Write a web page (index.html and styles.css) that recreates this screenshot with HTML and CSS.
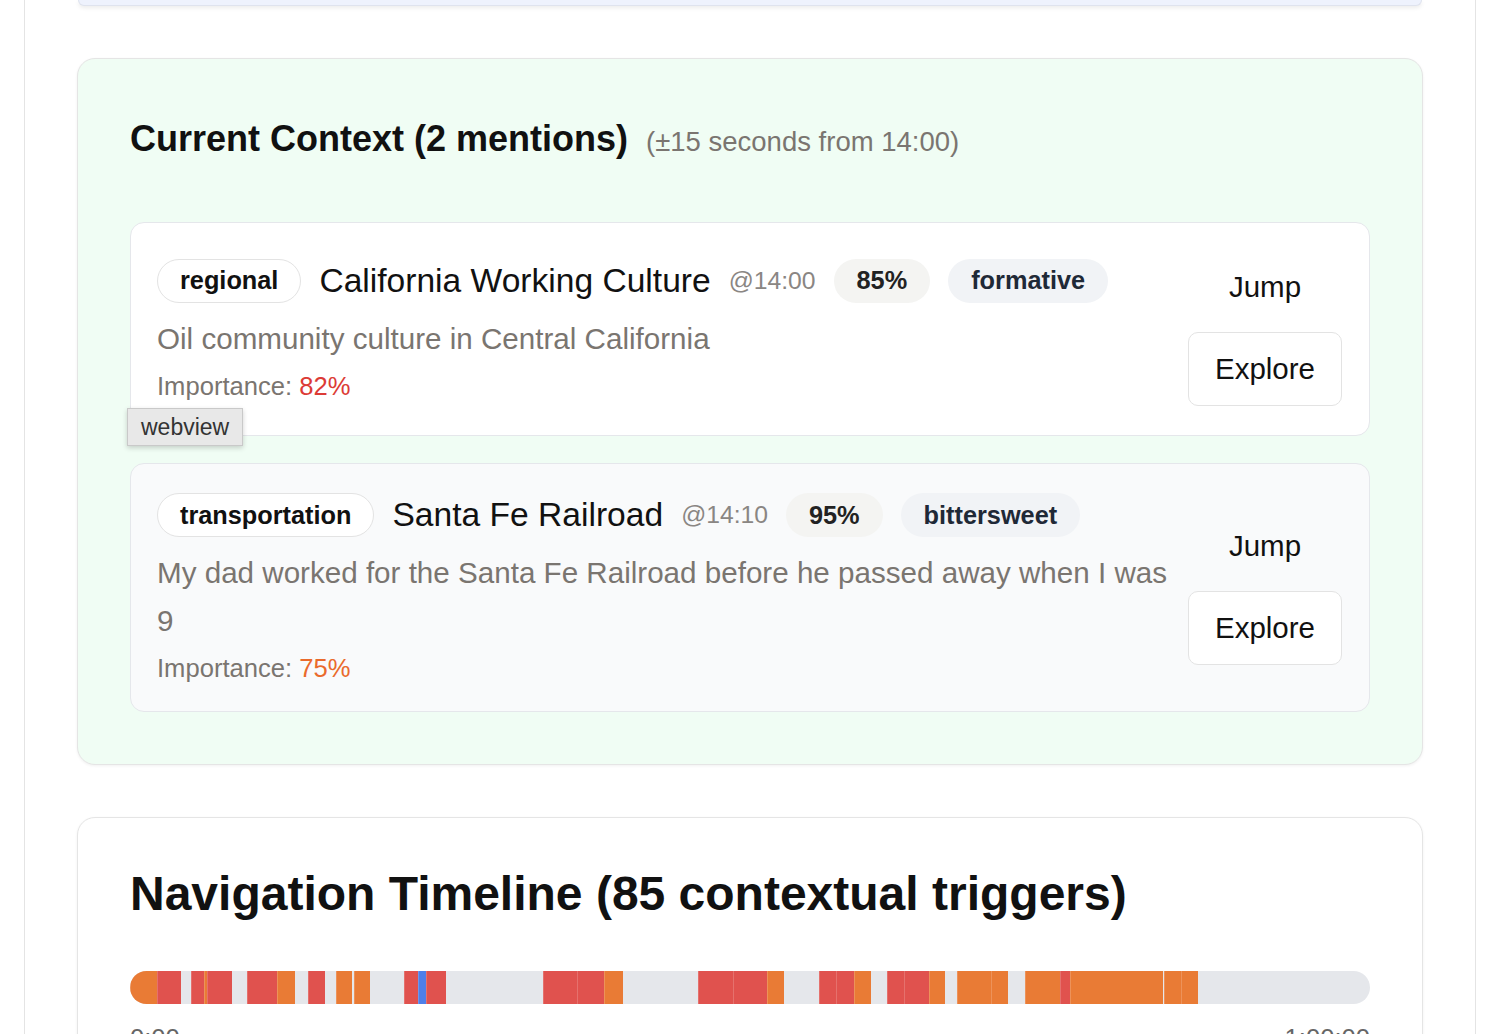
FILE: index.html
```html
<!DOCTYPE html>
<html lang="en">
<head>
<meta charset="utf-8">
<title>Context</title>
<link rel="stylesheet" href="styles.css">
</head>
<body>
<div class="page">
  <div class="prev-section"></div>

  <section class="panel panel-context">
    <div class="panel-head">
      <h2 class="panel-title">Current Context (2 mentions)</h2>
      <span class="panel-sub">(±15 seconds from 14:00)</span>
    </div>

    <div class="mentions">
      <div class="mention mention-white">
        <div class="mention-main">
          <div class="mention-row">
            <span class="pill pill-tag">regional</span>
            <span class="mention-title">California Working Culture</span>
            <span class="mention-time">@14:00</span>
            <span class="pill pill-score">85%</span>
            <span class="pill pill-mood">formative</span>
          </div>
          <p class="mention-desc">Oil community culture in Central California</p>
          <p class="mention-imp">Importance: <span class="imp-red">82%</span></p>
        </div>
        <div class="mention-actions">
          <button class="btn btn-plain">Jump</button>
          <button class="btn btn-outline">Explore</button>
        </div>
      </div>

      <div class="mention mention-gray">
        <div class="mention-main">
          <div class="mention-row">
            <span class="pill pill-tag">transportation</span>
            <span class="mention-title">Santa Fe Railroad</span>
            <span class="mention-time">@14:10</span>
            <span class="pill pill-score">95%</span>
            <span class="pill pill-mood">bittersweet</span>
          </div>
          <p class="mention-desc">My dad worked for the Santa Fe Railroad before he passed away when I was 9</p>
          <p class="mention-imp">Importance: <span class="imp-orange">75%</span></p>
        </div>
        <div class="mention-actions">
          <button class="btn btn-plain">Jump</button>
          <button class="btn btn-outline">Explore</button>
        </div>
      </div>
    </div>
  </section>

  <section class="panel panel-timeline">
    <h2 class="timeline-title">Navigation Timeline (85 contextual triggers)</h2>
    <div class="timeline-bar">
      <span class="seg seg-o" style="left:0%;width:2.18%"></span>
      <span class="seg seg-r" style="left:2.18%;width:1.94%"></span>
      <span class="seg seg-r" style="left:4.92%;width:1.05%"></span>
      <span class="seg seg-o" style="left:5.97%;width:0.24%"></span>
      <span class="seg seg-r" style="left:6.21%;width:2.02%"></span>
      <span class="seg seg-r" style="left:9.44%;width:2.42%"></span>
      <span class="seg seg-o" style="left:11.85%;width:1.45%"></span>
      <span class="seg seg-r" style="left:14.35%;width:1.37%"></span>
      <span class="seg seg-o" style="left:16.61%;width:1.29%"></span>
      <span class="seg seg-o" style="left:18.06%;width:1.29%"></span>
      <span class="seg seg-r" style="left:22.10%;width:1.13%"></span>
      <span class="seg seg-b" style="left:23.23%;width:0.65%"></span>
      <span class="seg seg-r" style="left:23.87%;width:1.61%"></span>
      <span class="seg seg-r" style="left:33.31%;width:2.74%"></span>
      <span class="seg seg-r" style="left:36.05%;width:2.18%"></span>
      <span class="seg seg-o" style="left:38.23%;width:1.53%"></span>
      <span class="seg seg-r" style="left:45.81%;width:2.82%"></span>
      <span class="seg seg-r" style="left:48.63%;width:2.74%"></span>
      <span class="seg seg-o" style="left:51.37%;width:1.37%"></span>
      <span class="seg seg-r" style="left:55.56%;width:1.37%"></span>
      <span class="seg seg-r" style="left:56.94%;width:1.45%"></span>
      <span class="seg seg-o" style="left:58.39%;width:1.37%"></span>
      <span class="seg seg-r" style="left:61.05%;width:1.37%"></span>
      <span class="seg seg-r" style="left:62.42%;width:2.02%"></span>
      <span class="seg seg-o" style="left:64.44%;width:1.29%"></span>
      <span class="seg seg-o" style="left:66.69%;width:2.74%"></span>
      <span class="seg seg-o" style="left:69.44%;width:1.37%"></span>
      <span class="seg seg-o" style="left:72.18%;width:2.82%"></span>
      <span class="seg seg-r" style="left:75.00%;width:0.81%"></span>
      <span class="seg seg-o" style="left:75.81%;width:7.50%"></span>
      <span class="seg seg-o" style="left:83.39%;width:1.37%"></span>
      <span class="seg seg-o" style="left:84.76%;width:1.37%"></span>
    </div>
    <div class="timeline-labels">
      <span>0:00</span>
      <span>1:00:00</span>
    </div>
  </section>

  <div class="tooltip">webview</div>
</div>
</body>
</html>
```

FILE: styles.css
```css
html, body {
  margin: 0;
  padding: 0;
  background: #ffffff;
  overflow: hidden;
}

body {
  font-family: "Liberation Sans", Arial, Helvetica, sans-serif;
  color: #111111;
}

.page {
  position: relative;
  margin: 0 18px 0 24px;
  min-height: 1034px;
  border-left: 1px solid #e4e4e4;
  border-right: 1px solid #e4e4e4;
  padding: 0 52px;
  background: #ffffff;
  overflow: hidden;
}

.prev-section {
  height: 5px;
  background: #eef2fd;
  border: 1px solid #dfe3ee;
  border-top: none;
  border-radius: 0 0 16px 16px;
  box-shadow: 0 2px 4px rgba(0, 0, 0, 0.08);
  margin: 0 1px 52px;
}

.panel {
  border: 1px solid #e5e5e5;
  border-radius: 18px;
  box-shadow: 0 1px 3px rgba(0, 0, 0, 0.06);
  padding: 48px 52px 52px;
  margin-bottom: 52px;
}

.panel-context {
  background: #f0fdf4;
}

.panel-timeline {
  background: #ffffff;
}

.panel-head {
  display: flex;
  align-items: baseline;
  gap: 18px;
  margin-top: 11px;
  margin-bottom: 62px;
}

.panel-title {
  margin: 0;
  font-size: 36px;
  line-height: 42px;
  font-weight: 700;
  color: #111111;
}

.panel-sub {
  font-size: 27.5px;
  color: #7a7570;
}

.mentions {
  display: flex;
  flex-direction: column;
  gap: 27px;
}

.mention {
  display: flex;
  align-items: center;
  gap: 12px;
  border: 1px solid #e5e7eb;
  border-radius: 14px;
  padding: 29px 27px 29px 26px;
}

.mention-white {
  background: #ffffff;
}

.mention-gray {
  background: #f9fafb;
}

.mention-main {
  flex: 1;
  min-width: 0;
}

.mention-row {
  display: flex;
  align-items: center;
  gap: 18px;
  height: 44px;
}

.pill {
  display: inline-flex;
  align-items: center;
  height: 44px;
  box-sizing: border-box;
  padding: 0 22px;
  border: 1px solid transparent;
  border-radius: 22px;
  font-size: 25.3px;
  font-weight: 700;
  white-space: nowrap;
}

.pill-tag {
  background: #ffffff;
  border-color: #e3e3e3;
  color: #111111;
}

.pill-score {
  background: #f4f4f2;
  color: #222222;
}

.pill-mood {
  background: #f1f3f6;
  color: #1f2937;
}

.mention-title {
  font-size: 33.6px;
  color: #111111;
  white-space: nowrap;
}

.mention-time {
  font-size: 24.7px;
  color: #8a8683;
  white-space: nowrap;
}

.mention-desc {
  margin: 12px 0 0;
  font-size: 29.6px;
  line-height: 48px;
  color: #7a7570;
}

.mention-imp {
  margin: 9px 0 0;
  font-size: 25.6px;
  line-height: 28px;
  color: #7a7570;
}

.imp-red {
  color: #dc3b36;
}

.imp-orange {
  color: #ea6a2c;
}

.mention-actions {
  display: flex;
  flex-direction: column;
  gap: 10px;
  flex: 0 0 154px;
}

.btn {
  width: 154px;
  height: 74px;
  box-sizing: border-box;
  font-family: "Liberation Sans", Arial, sans-serif;
  font-size: 29.5px;
  color: #111111;
  border-radius: 10px;
  padding: 0;
}

.btn-plain {
  height: 70px;
  background: transparent;
  border: 1.5px solid transparent;
}

.btn-outline {
  background: #ffffff;
  border: 1.5px solid #e3e3e3;
}

.timeline-title {
  margin: 0;
  font-size: 48px;
  line-height: 55px;
  font-weight: 700;
  color: #111111;
}

.timeline-bar {
  position: relative;
  margin-top: 50px;
  height: 33px;
  border-radius: 17px;
  background: #e5e7eb;
  overflow: hidden;
}

.seg {
  position: absolute;
  top: 0;
  bottom: 0;
  box-shadow: inset 1px 0 0 rgba(255, 255, 255, 0.18);
}

.seg-o {
  background: #e97b35;
}

.seg-r {
  background: #e0524e;
}

.seg-b {
  background: #4f7fe8;
}

.timeline-labels {
  display: flex;
  justify-content: space-between;
  margin-top: 19px;
  font-size: 25.6px;
  line-height: 30px;
  color: #666666;
}

.tooltip {
  position: absolute;
  left: 102px;
  top: 408px;
  height: 38px;
  box-sizing: border-box;
  padding: 0 13px;
  display: flex;
  align-items: center;
  background: #e8e8e8;
  border: 1px solid #c9c9c9;
  box-shadow: 0 2px 5px rgba(0, 0, 0, 0.18);
  font-size: 23px;
  color: #333333;
}
```
